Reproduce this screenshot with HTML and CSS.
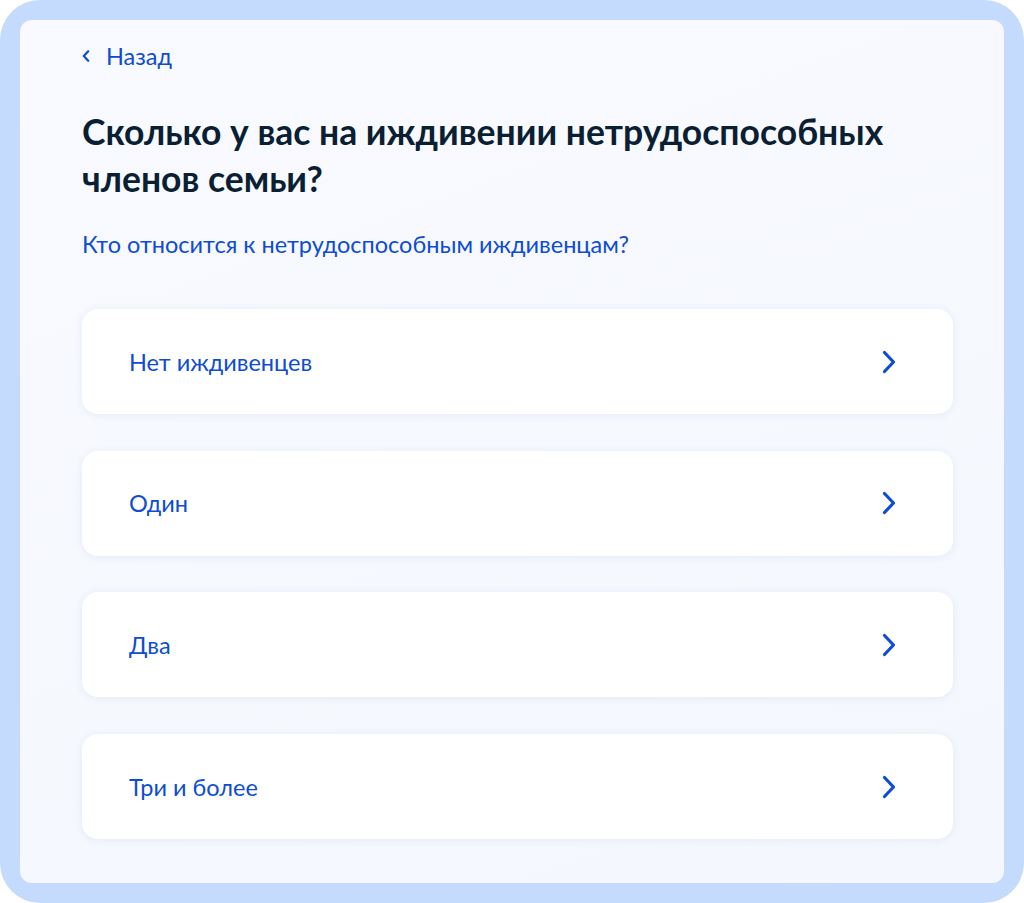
FILE: index.html
```html
<!DOCTYPE html>
<html lang="ru">
<head>
<meta charset="utf-8">
<title>Иждивенцы</title>
<link rel="stylesheet" href="styles.css">
</head>
<body>
<div class="frame">
  <main class="panel">
    <a class="back" href="#">
      <svg class="back-icon" width="8" height="12" viewBox="0 0 8 12"><path d="M6.2 1.2L1.8 6l4.4 4.8" fill="none" stroke="#0d4cd3" stroke-width="2.2" stroke-linecap="round" stroke-linejoin="round"/></svg>
      <span>Назад</span>
    </a>
    <h1 class="title">Сколько у вас на иждивении нетрудоспособных членов семьи?</h1>
    <a class="hint" href="#">Кто относится к нетрудоспособным иждивенцам?</a>
    <div class="options">
      <a class="option" href="#"><span>Нет иждивенцев</span><svg class="chev" width="16" height="24" viewBox="0 0 16 24"><path d="M3.5 2.5l9 9.5-9 9.5" fill="none" stroke="#0d4cd3" stroke-width="3.2" stroke-linecap="round" stroke-linejoin="round"/></svg></a>
      <a class="option" href="#"><span>Один</span><svg class="chev" width="16" height="24" viewBox="0 0 16 24"><path d="M3.5 2.5l9 9.5-9 9.5" fill="none" stroke="#0d4cd3" stroke-width="3.2" stroke-linecap="round" stroke-linejoin="round"/></svg></a>
      <a class="option" href="#"><span>Два</span><svg class="chev" width="16" height="24" viewBox="0 0 16 24"><path d="M3.5 2.5l9 9.5-9 9.5" fill="none" stroke="#0d4cd3" stroke-width="3.2" stroke-linecap="round" stroke-linejoin="round"/></svg></a>
      <a class="option" href="#"><span>Три и более</span><svg class="chev" width="16" height="24" viewBox="0 0 16 24"><path d="M3.5 2.5l9 9.5-9 9.5" fill="none" stroke="#0d4cd3" stroke-width="3.2" stroke-linecap="round" stroke-linejoin="round"/></svg></a>
    </div>
  </main>
</div>
</body>
</html>
```

FILE: styles.css
```css
* { box-sizing: border-box; }
html, body { margin: 0; padding: 0; background: #ffffff; }
body { font-family: Lato, "Noto Sans", sans-serif; }

.frame {
  width: 1024px;
  height: 903px;
  background: #c4dbfd;
  border-radius: 40px;
  padding: 20px;
}

.panel {
  height: 100%;
  background: linear-gradient(160deg, #f8faff 0%, #f4f7fd 100%);
  border-radius: 12px;
  padding: 22px 51px 0 62px;
  display: flex;
  flex-direction: column;
}

.back {
  display: flex;
  align-items: center;
  gap: 16px;
  color: #0d4cd3;
  text-decoration: none;
  font-size: 23.5px;
  line-height: 28px;
  height: 28px;
  align-self: flex-start;
}

.back-icon { display: block; }

.title {
  margin: 38px 0 0;
  font-size: 35.5px;
  line-height: 47px;
  font-weight: 700;
  color: #0b1f33;
  max-width: 830px;
}

.hint {
  margin-top: 28px;
  color: #0d4cd3;
  text-decoration: none;
  font-size: 23.5px;
  line-height: 28px;
  align-self: flex-start;
}

.options {
  margin-top: 51px;
  display: flex;
  flex-direction: column;
  gap: 36.7px;
}

.option {
  height: 105px;
  flex: none;
  background: #ffffff;
  border-radius: 16px;
  box-shadow: 0 1px 8px rgba(30, 70, 150, 0.08);
  display: flex;
  align-items: center;
  justify-content: space-between;
  padding: 0 56px 0 47px;
  color: #0d4cd3;
  text-decoration: none;
  font-size: 23.5px;
  line-height: 28px;
}

.chev { display: block; }
```
